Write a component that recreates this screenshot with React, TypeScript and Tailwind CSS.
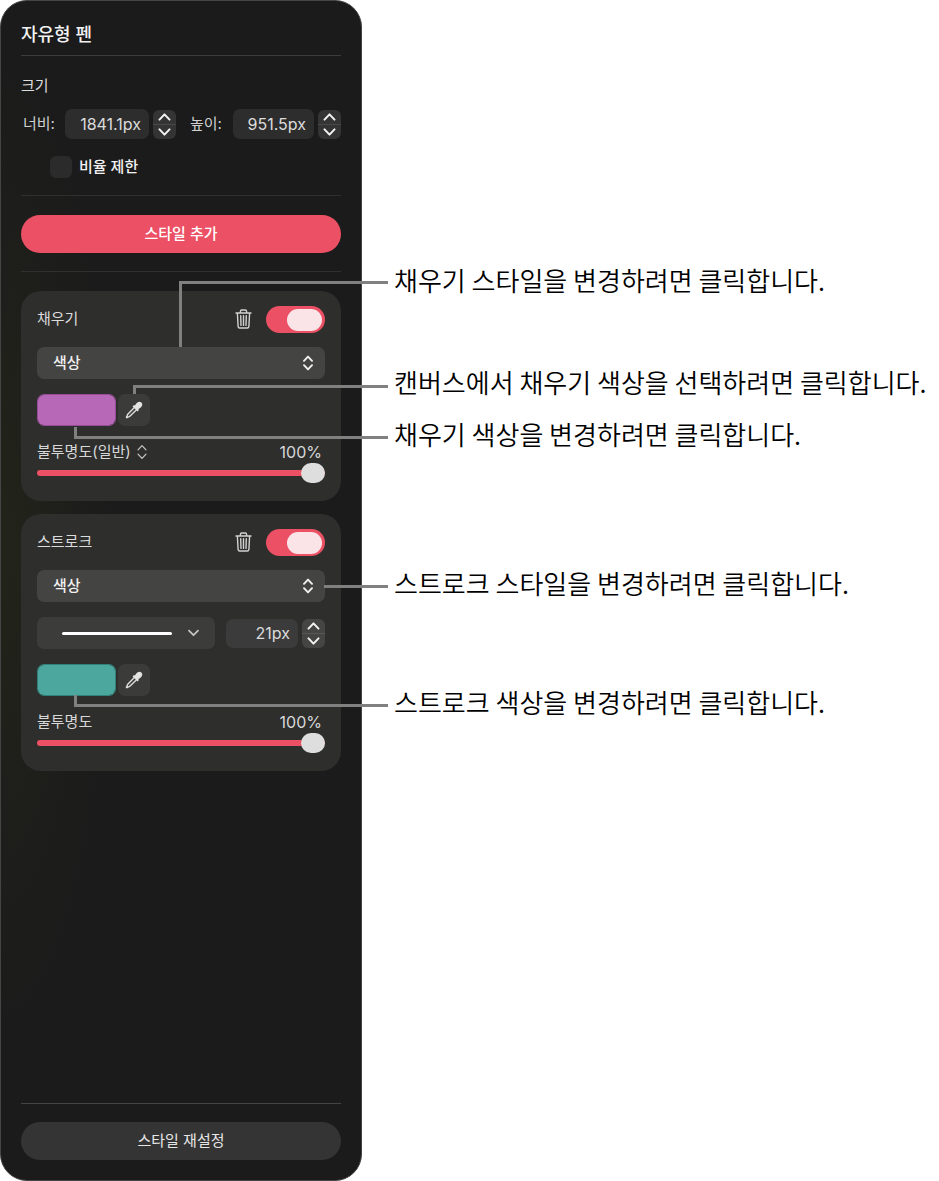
import { useState } from 'react'
import type { ReactNode } from 'react'

const FONT = "font-[Inter,'Noto_Sans_CJK_KR',sans-serif]"

function Chevron({ up = false }: { up?: boolean }) {
  return (
    <svg width="13" height="8" viewBox="0 0 13 8" fill="none" stroke="#f2f2f2" strokeWidth="2" strokeLinecap="round" strokeLinejoin="round" aria-hidden="true">
      <path d={up ? 'M1.5 6.6 6.5 1.4l5 5.2' : 'M1.5 1.4l5 5.2 5-5.2'} />
    </svg>
  )
}

function UpDown({ thin = false }: { thin?: boolean }) {
  return (
    <svg width="10" height="16" viewBox="0 0 10 16" fill="none" stroke={thin ? '#c8c8c8' : '#f0f0f0'} strokeWidth={thin ? 1.2 : 1.9} strokeLinecap="round" strokeLinejoin="round" aria-hidden="true">
      <path d="M1 5.8 5 1.6l4 4.2M1 10.2l4 4.2 4-4.2" />
    </svg>
  )
}

function TrashIcon() {
  return (
    <svg width="17" height="20" viewBox="0 0 17 20" fill="none" stroke="#d2d2d2" strokeWidth="1.4" strokeLinecap="round" strokeLinejoin="round" aria-hidden="true">
      <path d="M1 4h15M5.4 3.8V2.4c0-.9.5-1.4 1.3-1.4h3.6c.8 0 1.3.5 1.3 1.4v1.4M2.4 4.2l.7 13.2c.1 1.1.6 1.6 1.6 1.6h7.6c1 0 1.5-.5 1.6-1.6l.7-13.2M5.7 6.6l.3 9.8M8.5 6.6v9.8M11.3 6.6l-.3 9.8" />
    </svg>
  )
}

function EyedropperIcon() {
  return (
    <svg width="18" height="18" viewBox="0 0 18 18" aria-hidden="true">
      <path d="M9.4 6.6 3 13c-.7.7-.7 1.4-1 2.1l-.6 1.1.5.5 1.1-.6c.7-.3 1.4-.3 2.1-1l6.4-6.4" fill="none" stroke="#dedede" strokeWidth="1.4" strokeLinejoin="round" />
      <path d="M8.2 4.7c.5-.6 1.2-.6 1.7-.1l1.2-1.8c1.7-2.4 3.9-2.7 5.3-1.2 1.5 1.4 1.2 3.6-1.2 5.3l-1.8 1.2c.5.5.5 1.2-.1 1.7l-.7.6-5-5z" fill="#e4e4e4" />
    </svg>
  )
}

function Stepper({ label, light = false }: { label: string; light?: boolean }) {
  return (
    <div className={`flex h-[29px] w-[23px] flex-col rounded-md ${light ? 'bg-[#454544]' : 'bg-[#343434]'}`}>
      <button type="button" aria-label={`${label} +`} className="flex flex-1 items-center justify-center border-b border-white/10">
        <Chevron up />
      </button>
      <button type="button" aria-label={`${label} -`} className="flex flex-1 items-center justify-center">
        <Chevron />
      </button>
    </div>
  )
}

function Switch({ label }: { label: string }) {
  const [on, setOn] = useState(true)
  return (
    <input
      type="checkbox"
      role="switch"
      aria-label={label}
      checked={on}
      onChange={(e) => setOn(e.target.checked)}
      className="flex h-[27px] w-[59px] appearance-none items-center rounded-full bg-[#5a5a5a] px-[3px] before:h-[22px] before:w-[35px] before:rounded-full before:bg-[#fbe4e8] checked:justify-end checked:bg-[#ec5064]"
    />
  )
}

function StyleCard({ title, children }: { title: string; children: ReactNode }) {
  return (
    <section className="rounded-[20px] bg-[#2e2e2d] px-4 pt-[15px] pb-[18px]">
      <div className="flex h-[27px] items-center">
        <h3 className="flex-1 text-[15px] text-[#dcdcdc]">{title}</h3>
        <button type="button" aria-label={`${title} 삭제`} className="mr-3.5 flex pb-0.5">
          <TrashIcon />
        </button>
        <Switch label={title} />
      </div>
      {children}
    </section>
  )
}

function TypeSelect({ label }: { label: string }) {
  return (
    <div className="relative mt-3.5">
      <select aria-label={label} className="block h-8 w-full appearance-none rounded-[7px] bg-[#444443] px-4 text-[15px] font-medium text-[#f0f0f0]">
        <option>색상</option>
      </select>
      <div className="pointer-events-none absolute inset-y-0 right-3 flex items-center">
        <UpDown />
      </div>
    </div>
  )
}

function ColorRow({ label, color, border }: { label: string; color: string; border: string }) {
  return (
    <div className="mt-[15px] flex gap-0.5">
      <input
        type="color"
        aria-label={label}
        defaultValue={color}
        className={`h-8 w-[79px] appearance-none overflow-hidden rounded-[7px] border ${border} bg-transparent p-0 [&::-webkit-color-swatch-wrapper]:p-0 [&::-webkit-color-swatch]:border-0`}
      />
      <button type="button" aria-label="스포이트" className="flex size-8 items-center justify-center rounded-[7px] bg-[#3b3b3a]">
        <EyedropperIcon />
      </button>
    </div>
  )
}

function OpacityRow({ id, label, menu = false }: { id: string; label: string; menu?: boolean }) {
  const [value, setValue] = useState(100)
  return (
    <>
      <div className="mt-[15px] flex h-[22px] items-center text-[#d8d8d8]">
        <label htmlFor={id} className="text-[15px]">{label}</label>
        {menu && (
          <button type="button" aria-label="불투명도 유형" className="ml-1.5 flex">
            <UpDown thin />
          </button>
        )}
        <output htmlFor={id} className="ml-auto pr-[3px] text-base">{value}%</output>
      </div>
      <input
        id={id}
        type="range"
        value={value}
        onChange={(e) => setValue(Number(e.target.value))}
        className="block h-5 w-full appearance-none bg-transparent [&::-webkit-slider-runnable-track]:h-1.5 [&::-webkit-slider-runnable-track]:rounded-full [&::-webkit-slider-runnable-track]:bg-[#ec5064] [&::-webkit-slider-thumb]:-mt-[7px] [&::-webkit-slider-thumb]:h-5 [&::-webkit-slider-thumb]:w-6 [&::-webkit-slider-thumb]:appearance-none [&::-webkit-slider-thumb]:rounded-full [&::-webkit-slider-thumb]:bg-[#dedede]"
      />
    </>
  )
}

function Panel() {
  const field = 'h-[30px] rounded-[7px] bg-[#2d2d2d] pr-2 text-right text-base text-[#dcdcdc]'
  return (
    <aside className="flex min-h-screen w-[362px] shrink-0 flex-col rounded-[27px] border border-[#454545] bg-[#1b1b1b] bg-[radial-gradient(ellipse_110px_480px_at_0%_46%,#22241a,transparent)] px-5 pb-5">
      <h1 className="mt-4 flex h-[39px] items-center border-b border-[#3c3c3c] pb-0.5 text-lg font-medium text-[#f2f2f2]">자유형 펜</h1>

      <section className="border-b border-[#303030] pb-[17px]">
        <h2 className="mt-[19px] h-[22px] text-[15px]/[22px] text-[#dcdcdc]">크기</h2>
        <div className="mt-3 flex items-center">
          <label htmlFor="width" className="w-11 pl-0.5 text-[15px] text-[#d0d0d0]">너비:</label>
          <input id="width" type="text" defaultValue="1841.1px" className={`${field} mr-1 w-[84px]`} />
          <Stepper label="너비" />
          <label htmlFor="height" className="ml-3.5 w-[43px] text-[15px] text-[#d0d0d0]">높이:</label>
          <input id="height" type="text" defaultValue="951.5px" className={`${field} mr-1 w-[81px]`} />
          <Stepper label="높이" />
        </div>
        <label className="mt-[17px] ml-[29px] flex items-center gap-[7px] text-[15px]/[22px] font-medium text-[#f2f2f2]">
          <input type="checkbox" className="size-[22px] appearance-none rounded-[6px] bg-[#2b2b2b] checked:bg-[#ec5064]" />
          비율 제한
        </label>
      </section>

      <div className="border-b border-[#303030] pt-[19px] pb-[18px]">
        <button type="button" className="block h-[38px] w-full rounded-full bg-[#ec5064] text-[15px] font-medium text-white">스타일 추가</button>
      </div>

      <div className="mt-[19px] flex flex-col gap-[13px]">
        <StyleCard title="채우기">
          <TypeSelect label="채우기 스타일" />
          <ColorRow label="채우기 색상" color="#b768b7" border="border-[#944c96]" />
          <OpacityRow id="fill-opacity" label="불투명도(일반)" menu />
        </StyleCard>
        <StyleCard title="스트로크">
          <TypeSelect label="스트로크 스타일" />
          <div className="mt-[15px] flex items-center">
            <div className="relative flex-1">
              <select aria-label="선 종류" className="block h-8 w-full appearance-none rounded-[7px] bg-[#3c3c3b]">
                <option value="solid" aria-label="실선"></option>
              </select>
              <div className="pointer-events-none absolute inset-0 flex items-center gap-4 pr-4 pl-[25px]">
                <div className="h-[3px] flex-1 rounded-full bg-white" />
                <svg width="11" height="8" viewBox="0 0 11 8" fill="none" stroke="#c4c4c4" strokeWidth="1.8" strokeLinecap="round" strokeLinejoin="round" aria-hidden="true">
                  <path d="M1 1.6l4.5 4.6L10 1.6" />
                </svg>
              </div>
            </div>
            <input type="text" aria-label="스트로크 두께" defaultValue="21px" className="mr-1 ml-[11px] h-[29px] w-[72px] rounded-[7px] bg-[#3b3b3b] pr-2 text-right text-base text-[#dcdcdc]" />
            <Stepper label="스트로크 두께" light />
          </div>
          <ColorRow label="스트로크 색상" color="#4ca79e" border="border-[#2f8179]" />
          <OpacityRow id="stroke-opacity" label="불투명도" />
        </StyleCard>
      </div>

      <div className="mt-auto border-t border-[#444444] pt-[18px]">
        <button type="button" className="block h-[38px] w-full rounded-full bg-[#343434] text-[15px] text-[#e6e6e6]">스타일 재설정</button>
      </div>
    </aside>
  )
}

// Each leader runs back over the panel from the left edge of its callout
const callouts = [
  { text: '채우기 스타일을 변경하려면 클릭합니다.', gap: 'mt-[262px]', leader: 'top-[19px] h-[66px] w-[209px] border-t-3 border-l-3' },
  { text: '캔버스에서 채우기 색상을 선택하려면 클릭합니다.', gap: 'mt-[66px]', leader: 'top-[21px] h-[9px] w-[255px] border-t-3 border-l-3' },
  { text: '채우기 색상을 변경하려면 클릭합니다.', gap: 'mt-4', leader: 'top-[11px] h-3 w-[314px] border-b-3 border-l-3' },
  { text: '스트로크 스타일을 변경하려면 클릭합니다.', gap: 'mt-[113px]', leader: 'top-[20px] w-16 border-t-3' },
  { text: '스트로크 색상을 변경하려면 클릭합니다.', gap: 'mt-[83px]', leader: 'top-[11px] h-3 w-[314px] border-b-3 border-l-3' },
]

export default function App() {
  return (
    <main className={`flex min-h-screen bg-white ${FONT}`}>
      <Panel />
      <ul className="min-w-0 flex-1 pl-8">
        {callouts.map((c) => (
          <li key={c.text} className={`relative h-9 font-['Noto_Sans_CJK_KR',sans-serif] text-[26px]/[36px] font-[350] whitespace-nowrap text-black ${c.gap}`}>
            <span className={`pointer-events-none absolute right-full mr-1.5 border-[#808080] ${c.leader}`} aria-hidden="true" />
            {c.text}
          </li>
        ))}
      </ul>
    </main>
  )
}
